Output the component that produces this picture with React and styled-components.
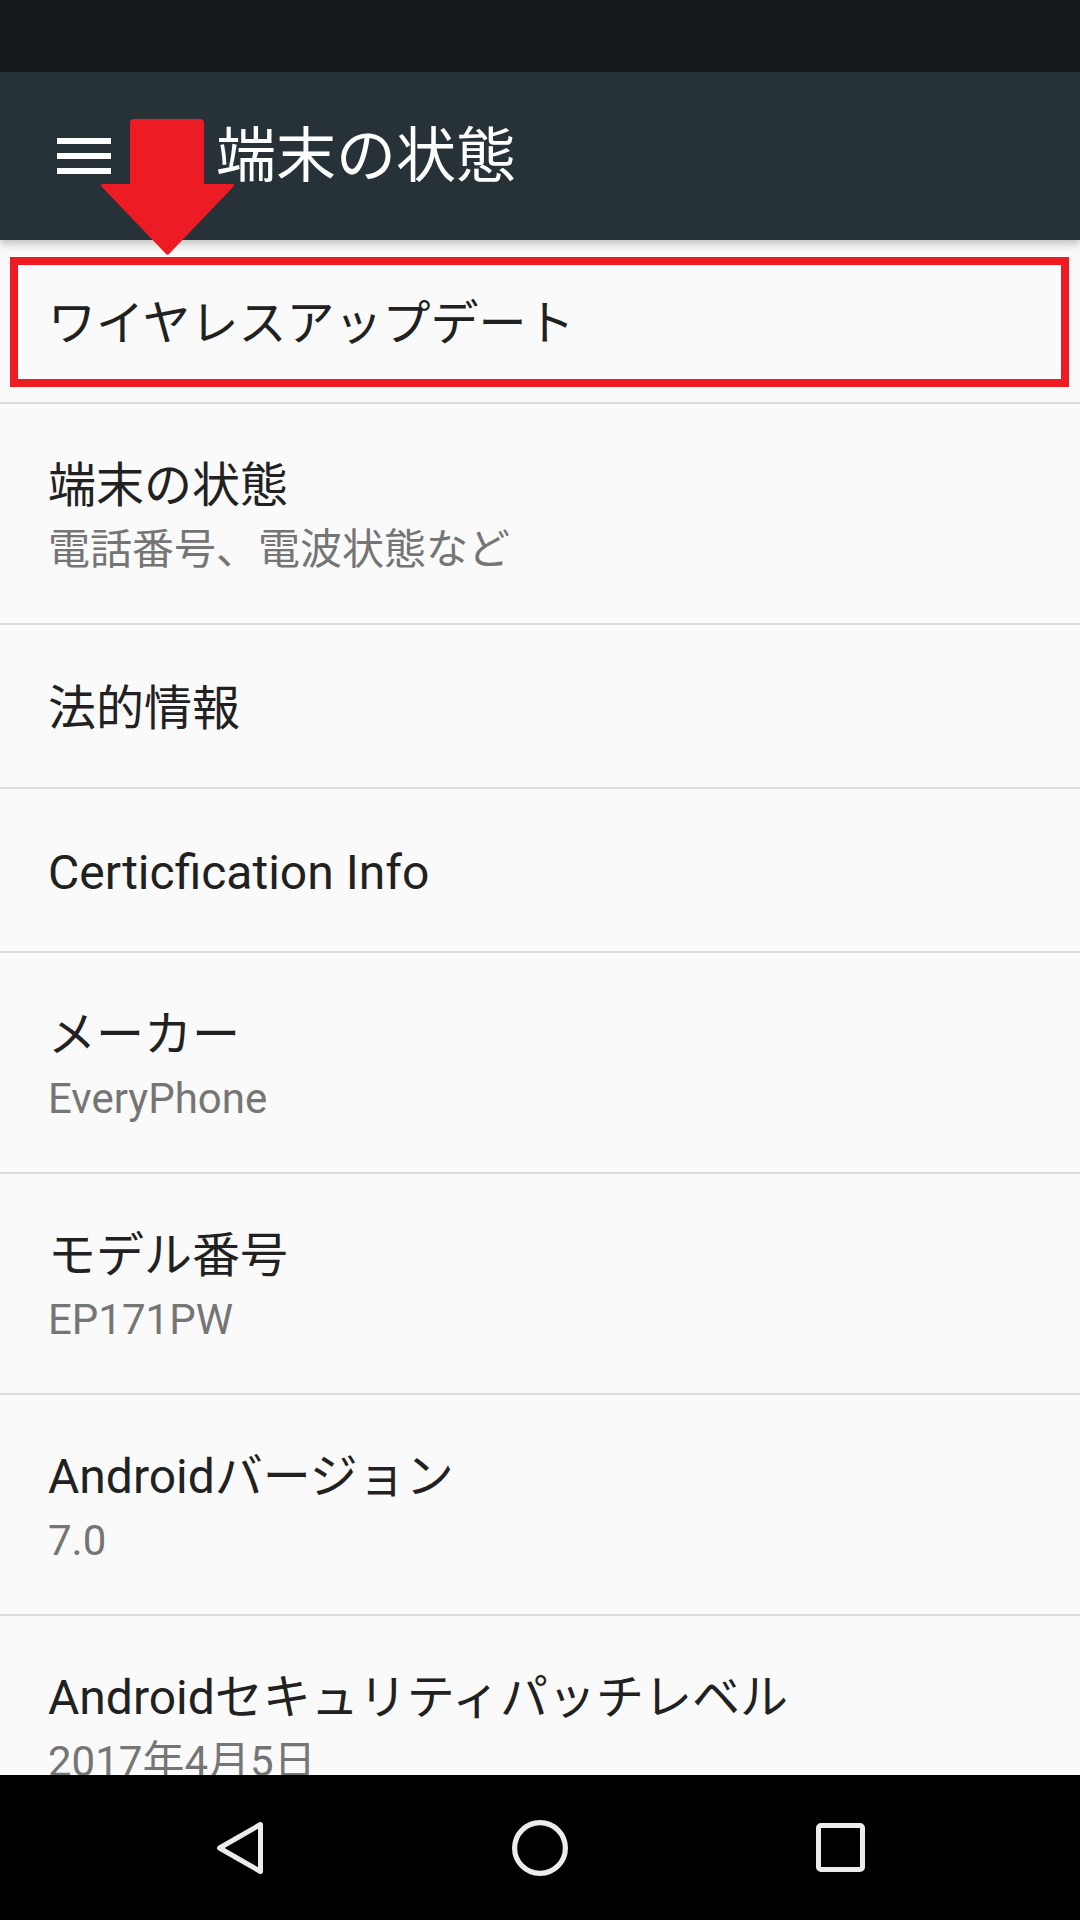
import React from 'react';
import styled, { createGlobalStyle } from 'styled-components';

const GlobalStyle = createGlobalStyle`
  html, body {
    margin: 0;
    padding: 0;
    background: #000;
  }
  * {
    box-sizing: border-box;
  }
`;

const Screen = styled.div`
  position: relative;
  display: flex;
  flex-direction: column;
  width: 1080px;
  height: 1920px;
  overflow: hidden;
  background-color: #fafafa;
  font-family: Roboto, 'Noto Sans CJK JP', sans-serif;
`;

const StatusBar = styled.div`
  height: 72px;
  flex-shrink: 0;
  background-color: #15191b;
`;

const Toolbar = styled.div`
  position: relative;
  z-index: 2;
  display: flex;
  align-items: center;
  height: 168px;
  flex-shrink: 0;
  padding-left: 48px;
  background-color: #263238;
  box-shadow: 0 3px 9px rgba(0, 0, 0, 0.28);
`;

const MenuButton = styled.div`
  display: flex;
  flex-direction: column;
  justify-content: center;
  align-items: center;
  gap: 9px;
  width: 72px;
  height: 72px;
  margin-right: 96px;
`;

const MenuBar = styled.span`
  display: block;
  width: 54px;
  height: 6px;
  background-color: #fff;
`;

const Title = styled.div`
  color: #fff;
  font-size: 60px;
  line-height: 72px;
  font-weight: 400;
  padding-top: 2px;
`;

const List = styled.div`
  flex: 1;
  overflow: hidden;
`;

const Row = styled.div`
  display: flex;
  flex-direction: column;
  justify-content: center;
  height: ${(props) => (props.$twoLine ? 221 : 164)}px;
  padding: 5px 0 0 48px;
  border-bottom: 2px solid #dcdcdc;
`;

const RowTitle = styled.div`
  color: #212121;
  font-size: 48px;
  line-height: 64px;
  white-space: nowrap;
`;

const RowSummary = styled.div`
  color: #757575;
  font-size: 42px;
  line-height: 58px;
  margin-top: 3px;
  white-space: nowrap;
`;

const NavBar = styled.div`
  display: grid;
  grid-template-columns: repeat(3, 300px);
  justify-content: center;
  align-items: center;
  height: 145px;
  flex-shrink: 0;
  background-color: #000;
`;

const NavButton = styled.div`
  display: flex;
  justify-content: center;
  align-items: center;
  height: 100%;
`;

const Highlight = styled.div`
  position: absolute;
  z-index: 3;
  left: 10px;
  top: 257px;
  width: 1059px;
  height: 130px;
  border: 8px solid #ed1c24;
`;

const Arrow = styled.svg`
  position: absolute;
  z-index: 4;
  left: 99px;
  top: 119px;
`;

const items = [
  { title: 'ワイヤレスアップデート' },
  { title: '端末の状態', summary: '電話番号、電波状態など' },
  { title: '法的情報' },
  { title: 'Certicfication Info' },
  { title: 'メーカー', summary: 'EveryPhone' },
  { title: 'モデル番号', summary: 'EP171PW' },
  { title: 'Androidバージョン', summary: '7.0' },
  { title: 'Androidセキュリティパッチレベル', summary: '2017年4月5日' },
];

const App = () => {
  return (
    <>
      <GlobalStyle />
      <Screen>
        <StatusBar />
        <Toolbar>
          <MenuButton>
            <MenuBar />
            <MenuBar />
            <MenuBar />
          </MenuButton>
          <Title>端末の状態</Title>
        </Toolbar>
        <List>
          {items.map((item) => (
            <Row key={item.title} $twoLine={!!item.summary}>
              <RowTitle>{item.title}</RowTitle>
              {item.summary && <RowSummary>{item.summary}</RowSummary>}
            </Row>
          ))}
        </List>
        <NavBar>
          <NavButton>
            <svg width='56' height='56' viewBox='0 0 56 56'>
              <path
                d='M7.5 28 L48.5 4.5 L48.5 51.5 Z'
                fill='none'
                stroke='#ececec'
                strokeWidth='5'
                strokeLinejoin='round'
              />
            </svg>
          </NavButton>
          <NavButton>
            <svg width='56' height='56' viewBox='0 0 56 56'>
              <circle cx='28' cy='28' r='25.4' fill='none' stroke='#ececec' strokeWidth='5.2' />
            </svg>
          </NavButton>
          <NavButton>
            <svg width='49' height='49' viewBox='0 0 49 49'>
              <rect x='2.5' y='2.5' width='44' height='44' rx='2.5' fill='none' stroke='#ececec' strokeWidth='5' />
            </svg>
          </NavButton>
        </NavBar>
        <Highlight />
        <Arrow width='137' height='137' viewBox='0 0 137 137'>
          <path
            d='M35 0 H101 Q105 0 105 4 V65 H133 Q137 65 134 68 L70 135 Q68.5 136.5 67 135 L3 68 Q0 65 4 65 H31 V4 Q31 0 35 0 Z'
            fill='#ed1c24'
          />
        </Arrow>
      </Screen>
    </>
  );
};

export default App;
